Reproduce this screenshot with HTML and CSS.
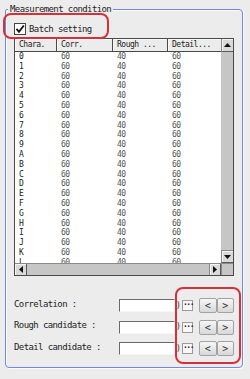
FILE: index.html
```html
<!DOCTYPE html>
<html>
<head>
<meta charset="utf-8">
<link rel="stylesheet" href="styles.css">
</head>
<body>
<div class="screen">
  <div class="group">
    <div class="legend">Measurement condition</div>
    <label class="batch">
      <span class="check"><svg width="10" height="10" viewBox="0 0 10 10"><polyline points="1.5,4.8 4,7.8 8.8,1.5" fill="none" stroke="#111" stroke-width="1.8"/></svg></span>
      <span class="batch-text">Batch setting</span>
    </label>
    <div class="list">
      <div class="viewport">
        <div class="row head">
          <div class="c c1">Chara.</div><div class="c c2">Corr.</div><div class="c c3">Rough ...</div><div class="c c4">Detail...</div>
        </div>
        <div class="row"><div class="c c1">0</div><div class="c c2">60</div><div class="c c3">40</div><div class="c c4">60</div></div>
        <div class="row"><div class="c c1">1</div><div class="c c2">60</div><div class="c c3">40</div><div class="c c4">60</div></div>
        <div class="row"><div class="c c1">2</div><div class="c c2">60</div><div class="c c3">40</div><div class="c c4">60</div></div>
        <div class="row"><div class="c c1">3</div><div class="c c2">60</div><div class="c c3">40</div><div class="c c4">60</div></div>
        <div class="row"><div class="c c1">4</div><div class="c c2">60</div><div class="c c3">40</div><div class="c c4">60</div></div>
        <div class="row"><div class="c c1">5</div><div class="c c2">60</div><div class="c c3">40</div><div class="c c4">60</div></div>
        <div class="row"><div class="c c1">6</div><div class="c c2">60</div><div class="c c3">40</div><div class="c c4">60</div></div>
        <div class="row"><div class="c c1">7</div><div class="c c2">60</div><div class="c c3">40</div><div class="c c4">60</div></div>
        <div class="row"><div class="c c1">8</div><div class="c c2">60</div><div class="c c3">40</div><div class="c c4">60</div></div>
        <div class="row"><div class="c c1">9</div><div class="c c2">60</div><div class="c c3">40</div><div class="c c4">60</div></div>
        <div class="row"><div class="c c1">A</div><div class="c c2">60</div><div class="c c3">40</div><div class="c c4">60</div></div>
        <div class="row"><div class="c c1">B</div><div class="c c2">60</div><div class="c c3">40</div><div class="c c4">60</div></div>
        <div class="row"><div class="c c1">C</div><div class="c c2">60</div><div class="c c3">40</div><div class="c c4">60</div></div>
        <div class="row"><div class="c c1">D</div><div class="c c2">60</div><div class="c c3">40</div><div class="c c4">60</div></div>
        <div class="row"><div class="c c1">E</div><div class="c c2">60</div><div class="c c3">40</div><div class="c c4">60</div></div>
        <div class="row"><div class="c c1">F</div><div class="c c2">60</div><div class="c c3">40</div><div class="c c4">60</div></div>
        <div class="row"><div class="c c1">G</div><div class="c c2">60</div><div class="c c3">40</div><div class="c c4">60</div></div>
        <div class="row"><div class="c c1">H</div><div class="c c2">60</div><div class="c c3">40</div><div class="c c4">60</div></div>
        <div class="row"><div class="c c1">I</div><div class="c c2">60</div><div class="c c3">40</div><div class="c c4">60</div></div>
        <div class="row"><div class="c c1">J</div><div class="c c2">60</div><div class="c c3">40</div><div class="c c4">60</div></div>
        <div class="row"><div class="c c1">K</div><div class="c c2">60</div><div class="c c3">40</div><div class="c c4">60</div></div>
        <div class="row"><div class="c c1">L</div><div class="c c2">60</div><div class="c c3">40</div><div class="c c4">60</div></div>
        <div class="row"><div class="c c1">M</div><div class="c c2">60</div><div class="c c3">40</div><div class="c c4">60</div></div>
      </div>
      <div class="vscroll">
        <div class="sbtn vtop"><svg width="7" height="4" viewBox="0 0 7 4"><polygon points="0,4 3.5,0 7,4" fill="#111"/></svg></div>
        <div class="track"></div>
        <div class="sbtn vbot"><svg width="7" height="4" viewBox="0 0 7 4"><polygon points="0,0 3.5,4 7,0" fill="#111"/></svg></div>
      </div>
      <div class="hscroll">
        <div class="sbtn hleft"><svg width="4" height="7" viewBox="0 0 4 7"><polygon points="4,0 0,3.5 4,7" fill="#111"/></svg></div>
        <div class="track"></div>
        <div class="sbtn hright"><svg width="4" height="7" viewBox="0 0 4 7"><polygon points="0,0 4,3.5 0,7" fill="#111"/></svg></div>
      </div>
      <div class="corner"></div>
    </div>
    <div class="form">
      <div class="frow">
        <span class="lbl">Correlation :</span>
        <span class="inp"></span><span class="rng">)</span>
        <span class="dots">&middot;&middot;&middot;</span>
        <span class="arr">&lt;</span><span class="arr">&gt;</span>
      </div>
      <div class="frow">
        <span class="lbl">Rough candidate :</span>
        <span class="inp"></span><span class="rng">)</span>
        <span class="dots">&middot;&middot;&middot;</span>
        <span class="arr">&lt;</span><span class="arr">&gt;</span>
      </div>
      <div class="frow">
        <span class="lbl">Detail candidate :</span>
        <span class="inp"></span><span class="rng">)</span>
        <span class="dots">&middot;&middot;&middot;</span>
        <span class="arr">&lt;</span><span class="arr">&gt;</span>
      </div>
    </div>
  </div>
  <div class="mark mark-top"></div>
  <div class="mark mark-bottom"></div>
</div>
</body>
</html>
```

FILE: styles.css
```css
html, body {
  margin: 0;
  padding: 0;
}
body {
  width: 250px;
  height: 379px;
  overflow: hidden;
  background: #ececec;
  font-family: "DejaVu Sans Mono", "Liberation Mono", monospace;
  color: #222;
}
.screen {
  position: relative;
  box-sizing: border-box;
  height: 379px;
  padding: 9px 7px 0 5px;
}
.group {
  position: relative;
  box-sizing: border-box;
  height: 359px;
  border: 1px solid #7287e6;
  border-radius: 2px 4px 4px 4px;
  box-shadow: inset 1px 1px 0 #fbfbff, 1px 1px 0 #fbfbff;
  padding: 13px 8px 0 8px;
}
.legend {
  position: absolute;
  left: 2px;
  top: -6px;
  height: 10px;
  line-height: 10px;
  padding: 0 2px 0 2px;
  background: #ececec;
  font-size: 9px;
  letter-spacing: -0.6px;
  color: #222;
}
.batch {
  display: flex;
  align-items: center;
  height: 12px;
  gap: 3px;
}
.check {
  box-sizing: border-box;
  width: 12px;
  height: 12px;
  border: 1px solid #444;
  background: #fff;
  display: flex;
  align-items: center;
  justify-content: center;
}
.batch-text {
  font-size: 9px;
  letter-spacing: -0.6px;
  line-height: 12px;
  margin-top: -1px;
}
.list {
  margin-top: 3px;
  box-sizing: border-box;
  height: 238px;
  border: 1px solid #4a4a4a;
  background: #fff;
  display: grid;
  grid-template-columns: 1fr 12px;
  grid-template-rows: 1fr 12px;
}
.viewport {
  overflow: hidden;
}
.row {
  display: flex;
  height: 9.8px;
  line-height: 9.8px;
  font-size: 8px;
  letter-spacing: -0.5px;
  color: #555;
}
.row .c1 {
  color: #222;
}
.c {
  box-sizing: border-box;
  padding-left: 4px;
  white-space: nowrap;
  overflow: hidden;
}
.c1 { width: 42px; }
.c2 { width: 56px; }
.c3 { width: 55px; }
.c4 { width: 53px; }
.head {
  height: 13px;
  line-height: 12px;
  color: #1a1a1a;
}
.head .c {
  background: #ececec;
  border-right: 1px solid #4a4a4a;
  border-bottom: 1px solid #4a4a4a;
  box-shadow: inset 1px 1px 0 #fafafa;
}
.head .c4 {
  border-right: none;
}
.vscroll {
  display: flex;
  flex-direction: column;
  background: #c6c6c6;
}
.hscroll {
  display: flex;
  background: #c6c6c6;
  border-top: 1px solid #8a8a8a;
}
.track {
  flex: 1;
}
.sbtn {
  box-sizing: border-box;
  display: flex;
  align-items: center;
  justify-content: center;
  background: #d9d9d9;
  box-shadow: inset 1px 1px 0 #f4f4f4;
}
.vtop, .vbot {
  height: 13px;
  border-bottom: 1px solid #5a5a5a;
  border-left: 1px solid #8a8a8a;
}
.vtop { height: 13px; }
.vbot { height: 13px; border-top: 1px solid #8a8a8a; }
.hleft, .hright {
  width: 12px;
  border-right: 1px solid #5a5a5a;
}
.hright { border-left: 1px solid #8a8a8a; }
.corner {
  background: #c6c6c6;
  border-top: 1px solid #8a8a8a;
  border-left: 1px solid #8a8a8a;
}
.form {
  margin-top: 22px;
  display: flex;
  flex-direction: column;
  gap: 6.5px;
}
.frow {
  display: flex;
  align-items: center;
  height: 15px;
}
.lbl {
  width: 105px;
  font-size: 9px;
  letter-spacing: -0.6px;
  line-height: 10px;
  margin-top: -4px;
  color: #222;
}
.inp {
  box-sizing: border-box;
  width: 56px;
  height: 13px;
  background: #fff;
  border-top: 1px solid #6a6a6a;
  border-left: 1px solid #6a6a6a;
  border-right: 1px solid #f6f6f6;
  border-bottom: 1px solid #f6f6f6;
}
.rng {
  width: 7px;
  font-size: 8px;
  line-height: 10px;
  color: #333;
  padding-left: 1px;
  box-sizing: border-box;
}
.dots {
  box-sizing: border-box;
  width: 11px;
  height: 11px;
  border: 1px solid #9a9a9a;
  background: #f7f7f7;
  font-size: 8px;
  line-height: 8px;
  letter-spacing: -1.5px;
  text-align: center;
  color: #222;
  margin-right: 6px;
  font-weight: bold;
}
.arr {
  box-sizing: border-box;
  width: 17.5px;
  height: 15px;
  border: 1px solid #a2a2a2;
  border-radius: 2px;
  background: linear-gradient(#f6f6f6, #d8d8d8);
  font-size: 10px;
  line-height: 13px;
  text-align: center;
  color: #333;
}
.mark {
  position: absolute;
  box-sizing: border-box;
  border: 2px solid #d8303a;
  border-radius: 8px;
}
.mark-top {
  left: 3px;
  top: 13px;
  width: 106px;
  height: 26px;
}
.mark-bottom {
  left: 175px;
  top: 287px;
  width: 66px;
  height: 77px;
}
```
